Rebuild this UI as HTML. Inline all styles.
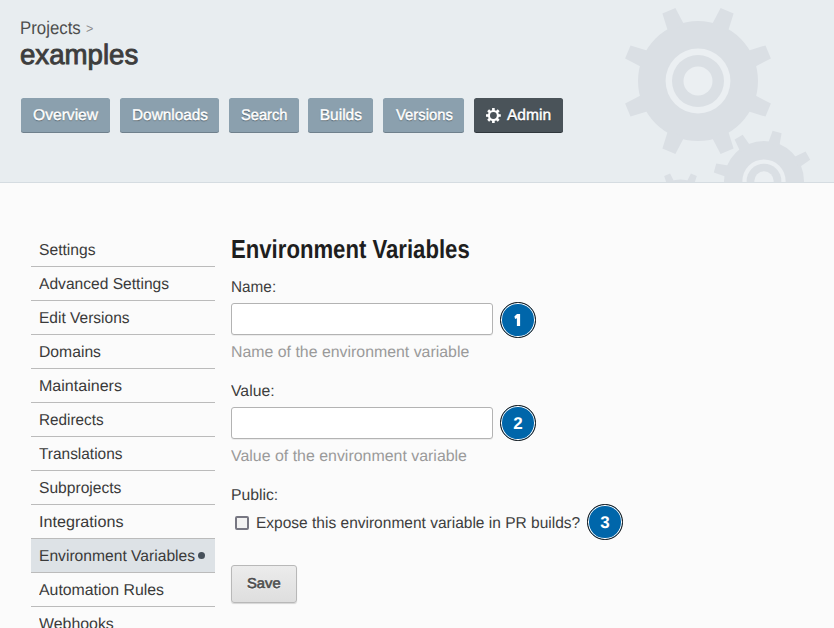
<!DOCTYPE html>
<html><head><meta charset="utf-8"><style>
*{box-sizing:border-box}
html,body{margin:0;padding:0;width:834px;height:628px;overflow:hidden;background:#fbfbfb;font-family:"Liberation Sans",sans-serif;text-rendering:geometricPrecision}
.t{position:absolute;white-space:nowrap;transform-origin:0 0}
#hdr{position:absolute;left:0;top:0;width:834px;height:183px;background:#e8edf0;border-bottom:1px solid #d5dce1;overflow:hidden}
#hdr svg{position:absolute;left:0;top:0}
.btn{position:absolute;top:98px;height:34px;background:#8ba0ae;border-radius:2.5px;box-shadow:0 1px 0 #6f808c}
.btn.dark{background:#4a5359;box-shadow:0 1px 0 #30373c}
.row{position:absolute;left:31px;width:184px;height:34px;border-bottom:1px solid #bbb}
.row.active{background:#dde2e6;top:539px}
.dot{position:absolute;left:198px;top:552px;width:7px;height:7px;border-radius:50%;background:#46505a}
.inp{position:absolute;left:231px;width:262px;height:32px;background:#fff;border:1px solid #b3b3b3;border-radius:3px;box-shadow:0 1px 0 rgba(0,0,0,.06)}
.badge{position:absolute;width:35.4px;height:35.4px;border-radius:50%;background:#0066aa;border:1.8px solid #161616;box-shadow:inset 0 0 0 1px #fff}
.dg{width:40px;text-align:center;color:#fff;font-weight:bold;font-size:17px;line-height:19px}
.cb{position:absolute;left:235px;top:516px;width:14px;height:14px;border:2px solid #777782;border-radius:2px;background:#f2f2f2}
.save{position:absolute;left:231px;top:565px;width:66px;height:38px;border:1px solid #b8b8b8;border-radius:3px;background:linear-gradient(#ececec,#dedede);box-shadow:0 1px 1px rgba(0,0,0,.15)}
</style></head><body>
<div id="hdr">
<svg width="834" height="183" viewBox="0 0 834 183"><g fill="#dadfe4"><circle cx="698" cy="81" r="60"/><polygon points="727.9,31.7 733.6,13.5 720.6,8.1 711.7,25.0"/><polygon points="754.0,67.3 770.9,58.4 765.5,45.4 747.3,51.1"/><polygon points="747.3,110.9 765.5,116.6 770.9,103.6 754.0,94.7"/><polygon points="711.7,137.0 720.6,153.9 733.6,148.5 727.9,130.3"/><polygon points="668.1,130.3 662.4,148.5 675.4,153.9 684.3,137.0"/><polygon points="642.0,94.7 625.1,103.6 630.5,116.6 648.7,110.9"/><polygon points="648.7,51.1 630.5,45.4 625.1,58.4 642.0,67.3"/><polygon points="684.3,25.0 675.4,8.1 662.4,13.5 668.1,31.7"/></g><circle cx="698" cy="81" r="32.4" fill="#ebeff2"/><circle cx="698" cy="81" r="26" fill="#dadfe4"/><circle cx="698" cy="81" r="14.5" fill="#ebeff2"/><g fill="#dadfe4"><circle cx="764" cy="181" r="40.02"/><polygon points="779.2,146.8 781.6,133.2 772.6,130.8 767.9,143.7"/><polygon points="799.0,167.5 810.2,159.7 805.6,151.6 793.1,157.4"/><polygon points="798.2,196.2 811.8,198.6 814.2,189.6 801.3,184.9"/><polygon points="777.5,216.0 785.3,227.2 793.4,222.6 787.6,210.1"/><polygon points="748.8,215.2 746.4,228.8 755.4,231.2 760.1,218.3"/><polygon points="729.0,194.5 717.8,202.3 722.4,210.4 734.9,204.6"/><polygon points="729.8,165.8 716.2,163.4 713.8,172.4 726.7,177.1"/><polygon points="750.5,146.0 742.7,134.8 734.6,139.4 740.4,151.9"/></g><circle cx="764" cy="181" r="21.6108" fill="#ebeff2"/><circle cx="764" cy="181" r="17.342000000000002" fill="#dadfe4"/><circle cx="764" cy="181" r="9.6715" fill="#ebeff2"/><g fill="#dadfe4"><circle cx="680.5" cy="207" r="27.48"/><polygon points="693.6,185.9 696.8,176.1 690.9,173.6 686.2,182.8"/><polygon points="704.7,201.3 713.9,196.6 711.4,190.7 701.6,193.9"/><polygon points="701.6,220.1 711.4,223.3 713.9,217.4 704.7,212.7"/><polygon points="686.2,231.2 690.9,240.4 696.8,237.9 693.6,228.1"/><polygon points="667.4,228.1 664.2,237.9 670.1,240.4 674.8,231.2"/><polygon points="656.3,212.7 647.1,217.4 649.6,223.3 659.4,220.1"/><polygon points="659.4,193.9 649.6,190.7 647.1,196.6 656.3,201.3"/><polygon points="674.8,182.8 670.1,173.6 664.2,176.1 667.4,185.9"/></g><circle cx="680.5" cy="207" r="14.8392" fill="#ebeff2"/><circle cx="680.5" cy="207" r="11.908000000000001" fill="#dadfe4"/><circle cx="680.5" cy="207" r="6.641" fill="#ebeff2"/></svg>
<div class="t" style="left:20px;top:17px;font-size:18.3px;line-height:22px;font-weight:400;color:#4d4d4d;transform:scaleX(0.9191);">Projects</div><div class="t" style="left:85.93px;top:21px;font-size:13.5px;line-height:16px;font-weight:400;color:#8a8a8a;transform:scaleX(0.9333);">&gt;</div><div class="t" style="left:20px;top:38px;font-size:28px;line-height:34px;font-weight:400;color:#3d3d3d;transform:scaleX(0.9869);-webkit-text-stroke:0.9px #3d3d3d">examples</div>
<div class="btn" style="left:20.5px;width:89.6px"></div><div class="btn" style="left:119.6px;width:99.8px"></div><div class="btn" style="left:228.5px;width:70.2px"></div><div class="btn" style="left:308.1px;width:65.1px"></div><div class="btn" style="left:382.9px;width:81.2px"></div><div class="btn dark" style="left:474.2px;width:88.7px"></div>
<svg style="position:absolute;left:474px;top:98px" width="40" height="33"><g fill="#fff"><circle cx="19.4" cy="17.5" r="5.5"/><polygon points="20.8,15.0 20.7,10.1 18.1,10.1 18.0,15.0"/><polygon points="22.2,16.7 25.6,13.2 23.7,11.3 20.2,14.7"/><polygon points="21.9,18.9 26.8,18.8 26.8,16.2 21.9,16.1"/><polygon points="20.2,20.3 23.7,23.7 25.6,21.8 22.2,18.3"/><polygon points="18.0,20.0 18.1,24.9 20.7,24.9 20.8,20.0"/><polygon points="16.6,18.3 13.2,21.8 15.1,23.7 18.6,20.3"/><polygon points="16.9,16.1 12.0,16.2 12.0,18.8 16.9,18.9"/><polygon points="18.6,14.7 15.1,11.3 13.2,13.2 16.6,16.7"/></g><circle cx="19.4" cy="17.5" r="3.4" fill="#4a5359"/></svg>
<div class="t" style="left:32.54px;top:106px;font-size:15.5px;line-height:19px;font-weight:400;color:#ffffff;transform:scaleX(1.0071);text-shadow:0 1px 1px rgba(0,0,0,.45);-webkit-text-stroke:0.4px #fff">Overview</div><div class="t" style="left:131.56px;top:106px;font-size:15.5px;line-height:19px;font-weight:400;color:#ffffff;transform:scaleX(0.9907);text-shadow:0 1px 1px rgba(0,0,0,.45);-webkit-text-stroke:0.4px #fff">Downloads</div><div class="t" style="left:240.69px;top:106px;font-size:15.5px;line-height:19px;font-weight:400;color:#ffffff;transform:scaleX(0.9453);text-shadow:0 1px 1px rgba(0,0,0,.45);-webkit-text-stroke:0.4px #fff">Search</div><div class="t" style="left:319.75px;top:106px;font-size:15.5px;line-height:19px;font-weight:400;color:#ffffff;text-shadow:0 1px 1px rgba(0,0,0,.45);-webkit-text-stroke:0.4px #fff">Builds</div><div class="t" style="left:395.8px;top:106px;font-size:15.5px;line-height:19px;font-weight:400;color:#ffffff;transform:scaleX(0.9559);text-shadow:0 1px 1px rgba(0,0,0,.45);-webkit-text-stroke:0.4px #fff">Versions</div><div class="t" style="left:507.4px;top:106px;font-size:15.5px;line-height:19px;font-weight:400;color:#ffffff;transform:scaleX(1.0023);text-shadow:0 1px 1px rgba(0,0,0,.45);-webkit-text-stroke:0.4px #fff">Admin</div>
</div>
<div class="row" style="top:233px"></div><div class="row" style="top:267px"></div><div class="row" style="top:301px"></div><div class="row" style="top:335px"></div><div class="row" style="top:369px"></div><div class="row" style="top:403px"></div><div class="row" style="top:437px"></div><div class="row" style="top:471px"></div><div class="row" style="top:505px"></div><div class="row active" style="top:539px"></div><div class="row" style="top:573px"></div><div class="row" style="top:607px"></div>
<div class="dot"></div>
<div class="t" style="left:39px;top:241px;font-size:15.8px;line-height:19px;font-weight:400;color:#3a3a3a;transform:scaleX(0.9912);">Settings</div><div class="t" style="left:39px;top:275px;font-size:15.8px;line-height:19px;font-weight:400;color:#3a3a3a;transform:scaleX(0.9874);">Advanced Settings</div><div class="t" style="left:39px;top:309px;font-size:15.8px;line-height:19px;font-weight:400;color:#3a3a3a;transform:scaleX(0.982);">Edit Versions</div><div class="t" style="left:39px;top:343px;font-size:15.8px;line-height:19px;font-weight:400;color:#3a3a3a;transform:scaleX(0.9943);">Domains</div><div class="t" style="left:39px;top:377px;font-size:15.8px;line-height:19px;font-weight:400;color:#3a3a3a;transform:scaleX(1.0154);">Maintainers</div><div class="t" style="left:39px;top:411px;font-size:15.8px;line-height:19px;font-weight:400;color:#3a3a3a;transform:scaleX(0.9675);">Redirects</div><div class="t" style="left:39px;top:445px;font-size:15.8px;line-height:19px;font-weight:400;color:#3a3a3a;transform:scaleX(0.9765);">Translations</div><div class="t" style="left:39px;top:479px;font-size:15.8px;line-height:19px;font-weight:400;color:#3a3a3a;transform:scaleX(0.988);">Subprojects</div><div class="t" style="left:39px;top:513px;font-size:15.8px;line-height:19px;font-weight:400;color:#3a3a3a;transform:scaleX(1.0232);">Integrations</div><div class="t" style="left:39px;top:547px;font-size:15.8px;line-height:19px;font-weight:400;color:#3a3a3a;transform:scaleX(0.9895);">Environment Variables</div><div class="t" style="left:39px;top:581px;font-size:15.8px;line-height:19px;font-weight:400;color:#3a3a3a;transform:scaleX(1.0028);">Automation Rules</div><div class="t" style="left:39px;top:615px;font-size:15.8px;line-height:19px;font-weight:400;color:#3a3a3a;transform:scaleX(1.0061);">Webhooks</div>
<div class="t" style="left:231px;top:234px;font-size:26px;line-height:31px;font-weight:700;color:#1e1e1e;transform:scaleX(0.8516);">Environment Variables</div>
<div class="t" style="left:231px;top:278px;font-size:15.8px;line-height:19px;font-weight:400;color:#3e3e3e;transform:scaleX(0.9702);">Name:</div><div class="inp" style="top:303px"></div><div class="t" style="left:231px;top:343px;font-size:15.8px;line-height:19px;font-weight:400;color:#9a9a9a;transform:scaleX(1.0051);">Name of the environment variable</div>
<div class="t" style="left:231px;top:382px;font-size:15.8px;line-height:19px;font-weight:400;color:#3e3e3e;transform:scaleX(0.9988);">Value:</div><div class="inp" style="top:407px"></div><div class="t" style="left:231px;top:447px;font-size:15.8px;line-height:19px;font-weight:400;color:#9a9a9a;transform:scaleX(1.0077);">Value of the environment variable</div>
<div class="t" style="left:231px;top:486px;font-size:15.8px;line-height:19px;font-weight:400;color:#3e3e3e;transform:scaleX(0.9957);">Public:</div><div class="cb"></div><div class="t" style="left:256px;top:514px;font-size:15.8px;line-height:19px;font-weight:400;color:#3e3e3e;transform:scaleX(0.982);">Expose this environment variable in PR builds?</div>
<div class="badge" style="left:500.3px;top:302.3px"></div><div class="t dg" style="left:498px;top:311px"></div><div class="badge" style="left:500.3px;top:405.3px"></div><div class="t dg" style="left:498px;top:414px">2</div><div class="badge" style="left:587.3px;top:504.3px"></div><div class="t dg" style="left:585px;top:513px">3</div>
<svg style="position:absolute;left:500px;top:300px" width="40" height="40"><polygon fill="#fff" points="17,14 20.1,14 20.1,26 16.9,26 16.9,18.3 15.1,18.9 14.4,16.6"/></svg>
<div class="save"></div><div class="t" style="left:246.93px;top:576px;font-size:14.3px;line-height:17px;font-weight:400;color:#4a4a4a;transform:scaleX(1.0304);-webkit-text-stroke:0.6px #505050;text-shadow:0 1px 0 #fff">Save</div>
</body></html>
